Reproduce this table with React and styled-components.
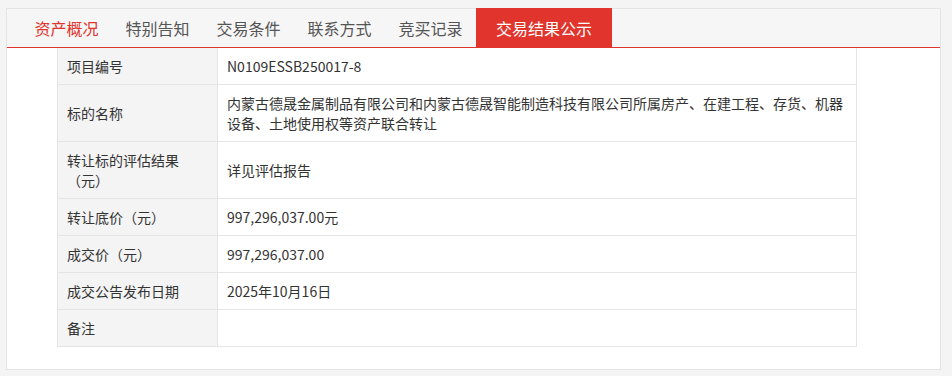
import React from 'react';
import styled, { createGlobalStyle } from 'styled-components';

const GlobalStyle = createGlobalStyle`
  html, body {
    margin: 0;
    background: #f4f4f4;
  }
  body {
    padding: 8px 0 0 6px;
    font-family: "Microsoft YaHei", "Noto Sans CJK SC", "Noto Sans", sans-serif;
  }
`;

const Panel = styled.div`
  width: 933px;
  background: #fff;
  border: 1px solid #e4e4e4;
  padding-bottom: 22px;
`;

const TabBar = styled.div`
  display: flex;
  height: 38px;
  padding-left: 14px;
  background: #f6f6f6;
  border-bottom: 1px solid #e0342c;
`;

const Tab = styled.div`
  display: flex;
  align-items: center;
  padding: 0 ${(p) => (p.$current ? '20px' : '13.5px')};
  margin-top: ${(p) => (p.$current ? '-1px' : '0')};
  font-size: 16px;
  color: ${(p) => (p.$current ? '#fff' : p.$first ? '#e0342c' : '#555')};
  background: ${(p) => (p.$current ? '#e0342c' : 'transparent')};
  cursor: pointer;
  white-space: nowrap;
`;

const Table = styled.table`
  width: 800px;
  margin-left: 50px;
  border-collapse: collapse;
  font-size: 14px;
  line-height: 20px;
  color: #333;
`;

const Label = styled.th`
  width: 141px;
  height: 20px;
  padding: 8px 9px;
  background: #f4f4f4;
  border: 1px solid #e4e4e4;
  border-top: ${(p) => (p.$top ? 'none' : '1px solid #e4e4e4')};
  font-weight: normal;
  text-align: left;
  vertical-align: middle;
`;

const Value = styled.td`
  padding: 8px 9px;
  background: #fff;
  border: 1px solid #e4e4e4;
  border-top: ${(p) => (p.$top ? 'none' : '1px solid #e4e4e4')};
  vertical-align: middle;
`;

const tabs = ['资产概况', '特别告知', '交易条件', '联系方式', '竞买记录', '交易结果公示'];

const rows = [
  ['项目编号', 'N0109ESSB250017-8'],
  ['标的名称', '内蒙古德晟金属制品有限公司和内蒙古德晟智能制造科技有限公司所属房产、在建工程、存货、机器设备、土地使用权等资产联合转让'],
  ['转让标的评估结果（元）', '详见评估报告'],
  ['转让底价（元）', '997,296,037.00元'],
  ['成交价（元）', '997,296,037.00'],
  ['成交公告发布日期', '2025年10月16日'],
  ['备注', ''],
];

export default function App() {
  return (
    <>
      <GlobalStyle />
      <Panel>
        <TabBar>
          {tabs.map((t, i) => (
            <Tab key={t} $first={i === 0} $current={i === tabs.length - 1}>
              {t}
            </Tab>
          ))}
        </TabBar>
        <Table>
          <tbody>
            {rows.map(([k, v], i) => (
              <tr key={k}>
                <Label $top={i === 0}>{k}</Label>
                <Value $top={i === 0}>{v}</Value>
              </tr>
            ))}
          </tbody>
        </Table>
      </Panel>
    </>
  );
}
